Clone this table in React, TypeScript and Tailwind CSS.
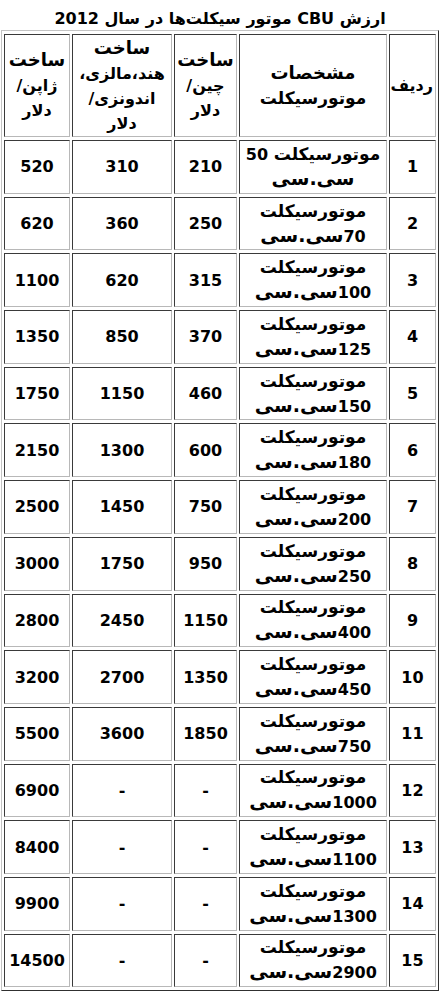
import React from "react";

type Row = { n: string; num: string; cn: string; in: string; jp: string };

const rows: Row[] = [
  { n: "1", num: "50", cn: "210", in: "310", jp: "520" },
  { n: "2", num: "70", cn: "250", in: "360", jp: "620" },
  { n: "3", num: "100", cn: "315", in: "620", jp: "1100" },
  { n: "4", num: "125", cn: "370", in: "850", jp: "1350" },
  { n: "5", num: "150", cn: "460", in: "1150", jp: "1750" },
  { n: "6", num: "180", cn: "600", in: "1300", jp: "2150" },
  { n: "7", num: "200", cn: "750", in: "1450", jp: "2500" },
  { n: "8", num: "250", cn: "950", in: "1750", jp: "3000" },
  { n: "9", num: "400", cn: "1150", in: "2450", jp: "2800" },
  { n: "10", num: "450", cn: "1350", in: "2700", jp: "3200" },
  { n: "11", num: "750", cn: "1850", in: "3600", jp: "5500" },
  { n: "12", num: "1000", cn: "-", in: "-", jp: "6900" },
  { n: "13", num: "1100", cn: "-", in: "-", jp: "8400" },
  { n: "14", num: "1300", cn: "-", in: "-", jp: "9900" },
  { n: "15", num: "2900", cn: "-", in: "-", jp: "14500" },
];

const cell =
  "border border-t-[#3a3a3a] border-r-[#b8b8b8] border-b-[#b8b8b8] border-l-[#3a3a3a] text-center align-middle px-[2px] py-0 whitespace-nowrap";

export default function App() {
  return (
    <div className="w-[445px] min-h-[998px] bg-white text-black font-['DejaVu_Sans',sans-serif] font-bold text-[16px]">
      <div
        dir="rtl"
        className="ml-[1px] w-[438px] h-[30px] flex items-center justify-center pt-[7px] text-[16px] leading-none whitespace-nowrap"
      >
        ارزش CBU موتور سیکلت‌ها در سال 2012
      </div>
      <table
        dir="rtl"
        className="ml-[1px] w-[438px] table-fixed border-separate border-spacing-x-[2px] border-spacing-y-[3px] border border-t-[#c4c4c4] border-l-[#c4c4c4] border-r-[#303030] border-b-[#303030] leading-[25px]"
      >
        <colgroup>
          <col className="w-[47px]" />
          <col className="w-[148px]" />
          <col className="w-[63px]" />
          <col className="w-[100px]" />
          <col className="w-[66px]" />
        </colgroup>
        <thead>
          <tr>
            <td className={`${cell} h-[103px]`}>ردیف</td>
            <td className={`${cell} h-[103px] text-[17px]`}>
              <span className="text-[18px] leading-none">مشخصات</span>
              <br />
              موتورسیکلت
            </td>
            <td className={`${cell} h-[103px]`}>
              <span className="text-[18px] leading-none">ساخت</span>
              <br />
              چین/
              <br />
              دلار
            </td>
            <td className={`${cell} h-[103px]`}>
              <span className="text-[18px] leading-none">ساخت</span>
              <br />
              هند،مالزی،
              <br />
              اندونزی/
              <br />
              دلار
            </td>
            <td className={`${cell} h-[103px]`}>
              <span className="text-[18px] leading-none">ساخت</span>
              <br />
              ژاپن/
              <br />
              دلار
            </td>
          </tr>
        </thead>
        <tbody>
          {rows.map((r) => (
            <tr key={r.n}>
              <td className={`${cell} h-[53.7px]`}>{r.n}</td>
              <td className={`${cell} h-[53.7px]`}>
                {r.n === "1" ? (
                  <>
                    <span className="text-[17px]">موتورسیکلت</span> 50
                    <br />
                    <span className="text-[19px] leading-none">سی.سی</span>
                  </>
                ) : (
                  <>
                    <span className="text-[17px]">موتورسیکلت</span>
                    <br />
                    {r.num}
                    <span className="text-[19px] leading-none">سی.سی</span>
                  </>
                )}
              </td>
              <td className={`${cell} h-[53.7px]`}>{r.cn}</td>
              <td className={`${cell} h-[53.7px]`}>{r.in}</td>
              <td className={`${cell} h-[53.7px]`}>{r.jp}</td>
            </tr>
          ))}
        </tbody>
      </table>
    </div>
  );
}
